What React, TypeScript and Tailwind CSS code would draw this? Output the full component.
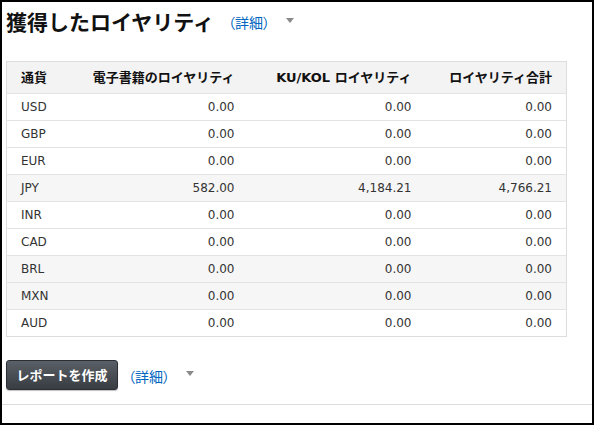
import React from "react";

const rows: [string, string, string, string][] = [
  ["USD", "0.00", "0.00", "0.00"],
  ["GBP", "0.00", "0.00", "0.00"],
  ["EUR", "0.00", "0.00", "0.00"],
  ["JPY", "582.00", "4,184.21", "4,766.21"],
  ["INR", "0.00", "0.00", "0.00"],
  ["CAD", "0.00", "0.00", "0.00"],
  ["BRL", "0.00", "0.00", "0.00"],
  ["MXN", "0.00", "0.00", "0.00"],
  ["AUD", "0.00", "0.00", "0.00"],
];

const shaded = new Set(["JPY", "BRL", "MXN"]);

function Caret() {
  return (
    <svg width="8" height="5" viewBox="0 0 8 5" className="block">
      <path d="M0 0 L8 0 L4 5 Z" fill="#8a8a8a" />
    </svg>
  );
}

function Detail() {
  return (
    <span className="text-[14px] text-[#0066c0] [font-feature-settings:'palt']">（詳細）</span>
  );
}

export default function App() {
  return (
    <div
      className="w-[594px] h-[425px] border-2 border-black bg-white flex flex-col text-[#111]"
      style={{ fontFamily: '"DejaVu Sans", "Noto Sans CJK JP", sans-serif' }}
    >
      <div className="pl-1">
        <div className="h-[38px] flex items-center">
          <h1
            className="text-[21px] font-bold leading-none text-[#111]"
            style={{ fontFamily: '"Noto Sans CJK JP", sans-serif' }}
          >
            獲得したロイヤリティ
          </h1>
          <span className="ml-[14px]" style={{ fontFamily: '"Noto Sans CJK JP", sans-serif' }}>
            <Detail />
          </span>
          <span className="ml-[16px] mt-[-1px]">
            <Caret />
          </span>
        </div>

        <table className="mt-[21px] w-[560px] border-collapse border border-[#dddddd] table-fixed">
          <colgroup>
            <col className="w-[70px]" />
            <col className="w-[172px]" />
            <col className="w-[177px]" />
            <col className="w-[141px]" />
          </colgroup>
          <thead>
            <tr className="h-[32px] bg-[#f3f3f3] text-[13px] font-bold">
              <th className="text-left pl-[14px] font-bold">通貨</th>
              <th className="text-right pr-[14px] font-bold">電子書籍のロイヤリティ</th>
              <th className="text-right pr-[14px] font-bold">KU/KOL ロイヤリティ</th>
              <th className="text-right pr-[14px] font-bold">ロイヤリティ合計</th>
            </tr>
          </thead>
          <tbody>
            {rows.map((r) => (
              <tr
                key={r[0]}
                className={`h-[27px] border-t border-[#e3e3e3] text-[12px] text-[#333] ${
                  shaded.has(r[0]) ? "bg-[#f6f6f6]" : "bg-white"
                }`}
              >
                <td className="text-left pl-[14px]">{r[0]}</td>
                <td className="text-right pr-[14px]">{r[1]}</td>
                <td className="text-right pr-[14px]">{r[2]}</td>
                <td className="text-right pr-[14px]">{r[3]}</td>
              </tr>
            ))}
          </tbody>
        </table>

        <div className="mt-[23px] h-[30px] flex items-center">
          <button
            className="h-[30px] w-[112px] rounded-[3px] border border-[#2b2f34] bg-gradient-to-b from-[#5a6067] to-[#383d42] text-white text-[13px] font-bold shadow-[0_1px_1px_rgba(0,0,0,0.25)]"
            style={{ fontFamily: '"Noto Sans CJK JP", sans-serif' }}
          >
            レポートを作成
          </button>
          <span className="ml-[10px]" style={{ fontFamily: '"Noto Sans CJK JP", sans-serif' }}>
            <Detail />
          </span>
          <span className="ml-[16px] mt-[-3px]">
            <Caret />
          </span>
        </div>
      </div>
      <div className="mt-[14px] border-t border-[#dddddd]" />
    </div>
  );
}
